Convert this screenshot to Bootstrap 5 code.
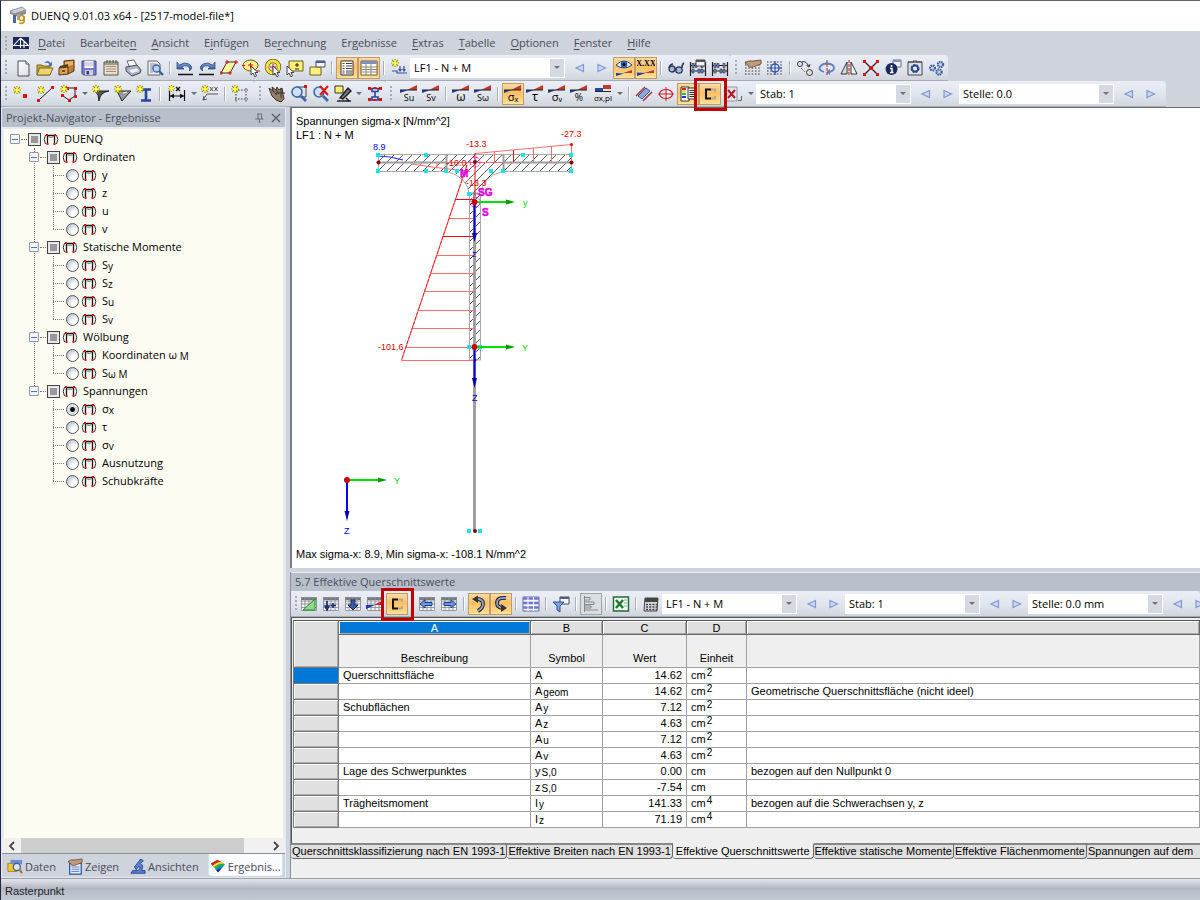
<!DOCTYPE html>
<html lang="de">
<head>
<meta charset="utf-8">
<meta name="viewport" content="width=device-width, initial-scale=1">
<title>DUENQ 9.01.03 x64 - [2517-model-file*]</title>
<link href="https://cdn.jsdelivr.net/npm/bootstrap@5.3.0/dist/css/bootstrap.min.css" rel="stylesheet">
<style>
:root{--frame:#cfd3dc;--ttl:#b8bfca;--ink:#4a4e5a}
html,body{height:100%}
body{font-family:"Open Sans","Noto Sans",sans-serif;font-size:11px;line-height:16px;color:#000;background:var(--frame);overflow:hidden}
.app-win{min-height:100vh;height:100vh;border-left:1px solid #23263f;border-top:1px solid #666}
.title-strip{height:30px;background:#fff;padding:0 8px}
.menu-strip{height:24px;padding-left:4px;color:var(--ink)}
.menu-strip a{color:#484c58;text-decoration:none;margin-right:15px}
.menu-strip u{text-underline-offset:2px}
.grip{width:3px;height:16px;margin:0 5px 0 4px;flex:none;background:repeating-linear-gradient(#a3a9b5 0 2px,transparent 2px 4px) 0 0/2px 100% no-repeat}
.menu-strip .grip{margin:0 4px 0 0;height:14px}
.tbar{height:26px;background:linear-gradient(#ebeef5,#dfe3eb 60%,#d0d4dd);border-bottom:1px solid #a6abb5;border-radius:0 4px 0 0;flex:none}
.tbtn{width:22px;height:22px;padding:0;border:1px solid transparent;border-radius:0;background:none;flex:none;display:flex;align-items:center;justify-content:center;position:relative;line-height:1}
.tbtn.wide{width:25px}
.tbtn.on{border-color:#c29b60;background:linear-gradient(#fcd9a2,#fdbf66 45%,#ffdf91);box-shadow:inset 0 0 1px #fff}
.tbtn.flat{border-color:#9aa5a8;background:#d9dee2}
.tbtn svg,.ic{width:18px;height:18px;flex:none;display:block;overflow:visible}
.drop{width:10px;height:22px;padding:0;border:0;background:none;flex:none;display:flex;align-items:center;justify-content:center}
.drop::before{content:"";border:3px solid transparent;border-top:3px solid #666b76;border-bottom:0}
.vsep{width:1px;height:14px;background:#a9aeb9;box-shadow:1px 0 #fff;margin:0 4px 0 3px;flex:none}
.mark-red::after{content:"";position:absolute;left:-6px;top:-6px;right:-7px;bottom:-7px;border:3px solid #c00000;z-index:3;pointer-events:none}
.pick{appearance:none;-webkit-appearance:none;width:155px;height:20px;flex:none;border:1px solid #fff;border-radius:0;padding:0 16px 0 3px;font-size:11px;line-height:16px;color:#000;
 background:url("data:image/svg+xml,%3Csvg xmlns='http://www.w3.org/2000/svg' width='14' height='18'%3E%3Crect width='14' height='18' fill='%23d5d9e2'/%3E%3Cpath d='M4 7h6l-3 3z' fill='%23707070'/%3E%3C/svg%3E") right center no-repeat #fff}
.pick.narrow{width:135px}
.nav-panel{width:285px;flex:none;border:1px solid #e3e8f2}
.panel-ttl{height:19px;background:var(--ttl);color:var(--ink);padding:0 4px;flex:none}
.tree-box{background:#fcfcf3;border:2px solid #e6ebf3;border-bottom:0;padding-top:1px;flex:1 1 0;min-height:0;overflow:hidden}
.tree-box ul{list-style:none;margin:0;padding:0;position:relative}
.tree-row{height:18px;display:flex;align-items:center;position:relative;white-space:nowrap}
.tree-row label{display:flex;align-items:center;height:18px}
.tree-row .ic{width:16px;height:16px;margin:0 5px 0 2px}
.tree-row sub{font-size:10px;line-height:0;bottom:-1px}
.lvl0{padding-left:6px}
.lvl1{padding-left:25px}
.lvl2{padding-left:62px}
.twig{width:10px;height:10px;padding:0;border:1px solid #8f98ae;border-radius:1px;background:linear-gradient(#5573b0,#5573b0) center/6px 1px no-repeat,#f3f4f6;flex:none;position:relative;z-index:1}
.lead-dots{width:6px;margin:0 1px;border-top:1px dotted #777;flex:none}
.lvl2::before{content:"";position:absolute;left:49px;width:11px;top:9px;border-top:1px dotted #777}
.branch::before{content:"";position:absolute;left:49px;top:0;bottom:9px;border-left:1px dotted #777}
.trunk::before{content:"";position:absolute;left:30px;top:0;height:240px;border-left:1px dotted #777}
.tree-row input{appearance:none;margin:0;flex:none}
.tree-row input[type=checkbox]{width:13px;height:13px;border:1px solid #444;background:linear-gradient(#999,#999) center/7px 7px no-repeat,#e8e8ea}
.tree-row input[type=radio]{width:13px;height:13px;border:1px solid #555;border-radius:50%;background:radial-gradient(circle at 8px 8px,#fff 3px,#c3ccd8 8px)}
.tree-row input[type=radio]:checked{background:radial-gradient(circle at center,#111 2px,#dfe4ea 3px,#d0d6dd 8px)}
.hscroll{height:16px;background:#f0f0f0;flex:none;border-bottom:1px solid #8a8f98}
.hscroll button{width:19px;border:0;padding:0;background:none;flex:none;height:15px;display:flex;align-items:center;justify-content:center}
.hscroll .thumb{width:223px;height:15px;background:#cdcdcd;flex:none}
.nav-tabsrow{height:23px;flex:none;padding:0 0 0 3px;gap:7px;background:var(--frame)}
.nav-tabsrow button{border:0;background:none;padding:3px 2px 0;height:22px;color:#484c58;display:flex;align-items:center;gap:2px;white-space:nowrap;flex:none}
.nav-tabsrow .ic{width:16px;height:16px}
.nav-tabsrow button.cur{background:#fbfbfd;box-shadow:inset 1px 0 #bfeaf0,inset -1px 0 #bfeaf0;border-radius:0 0 3px 3px}
.view-pane{flex:1 1 0;min-height:0;background:#fff;border-left:2px solid #7b7b7b;border-top:1px solid #6b6b6b;overflow:hidden;position:relative;font-family:"Liberation Sans",Arial,sans-serif;font-size:11px;line-height:13px}
.view-pane svg{position:absolute;left:0;top:0;width:100%;height:100%}
.cap-top{position:absolute;left:4px;top:6px;line-height:14px}
.cap-bot{position:absolute;left:4px;bottom:7px}
.view-pane text{font-family:"Liberation Sans",Arial,sans-serif;font-size:9px}
.view-pane .tagged text{font-size:10px}
.tab-pane-box{flex:none;border-left:1px solid #8b8f97;font-family:"Liberation Sans",Arial,sans-serif}
.tab-pane-box .panel-ttl,.tab-pane-box .tbar{font-family:"Open Sans","Noto Sans",sans-serif}
.sheet{border-top:1px solid #555;border-left:1px solid #555;background:#efefef;padding:2px 0 15px 1px;overflow:hidden}
.grid-tab{table-layout:fixed;width:100%;border-collapse:separate;border-spacing:0;font-size:11px;line-height:13px;border-top:1px solid #555;border-left:1px solid #777;margin:0}
.grid-tab td,.grid-tab th{border-right:1px solid #a0a0a0;border-bottom:1px solid #a0a0a0;padding:0 4px;height:16px;background:#fff;font-weight:400;white-space:nowrap;overflow:hidden}
.grid-tab sub,.grid-tab sup{font-size:10px;line-height:0;margin-left:1px}
.grid-tab sub{bottom:-1px}.grid-tab sup{top:-3px}
.grid-tab td:nth-child(4){text-align:right}
.grid-tab thead th{text-align:center;background:#efefef}
.grid-tab .letters th{height:14px;line-height:12px;background:#e0e0e0;border-bottom-color:#666;border-right-color:#666;box-shadow:inset 1px 1px #fff,inset -1px -1px #aaa}
.grid-tab .letters th.sel{background:#0078d7;color:#fff}
.grid-tab .names th{height:33px;vertical-align:bottom;padding-bottom:2px}
.grid-tab tbody th,.grid-tab .letters .corner{background:#e0e0e0;border-color:#777;box-shadow:inset 1px 1px #fff,inset -1px -1px #aaa}
.grid-tab tbody th.sel{background:#0078d7;box-shadow:none}
.sheet-tabs{height:35px;background:#efefef;font-size:11px;overflow:hidden;align-items:flex-start}
.sheet-tabs button{flex:none;height:16px;padding:0 1px;border:1px solid #666;border-left:0;border-top-width:2px;border-top-color:#888;background:#e0e0e0;color:#000;white-space:nowrap;border-radius:0 0 4px 3px;line-height:13px}
.sheet-tabs button.cur{background:#efefef;border-top-color:#efefef;padding:0 3px}
.status-strip{height:22px;flex:none;border-top:1px solid #9b9fa8;background:linear-gradient(#e3e5ea,#b1b6c0 45%,#b9bfca 60%,#c3c9d3);padding:4px 4px 0;font-family:"Liberation Sans",Arial,sans-serif;color:#222}
</style>
</head>
<body>
<svg width="0" height="0" class="position-absolute" aria-hidden="true">
<defs>
<linearGradient id="gBlue" x1="0" y1="0" x2="0" y2="1"><stop offset="0" stop-color="#8fb2e6"/><stop offset="1" stop-color="#26478f"/></linearGradient>
<linearGradient id="gPap" x1="0" y1="0" x2="1" y2="1"><stop offset="0" stop-color="#fff"/><stop offset="1" stop-color="#d9dde6"/></linearGradient>
<pattern id="hatch" width="9" height="9" patternUnits="userSpaceOnUse"><path d="M-1 10L10-1" stroke="#333" stroke-width=".8"/></pattern>
<symbol id="star" viewBox="0 0 8 8"><path d="M4 0V8M0 4H8M1 1L7 7M7 1L1 7" stroke="#a39a00" stroke-width="1.2"/><path d="M4 1V7M1 4H7" stroke="#fff53a" stroke-width="1.6"/><circle cx="4" cy="4" r="1.6" fill="#ffff70"/></symbol>
<symbol id="wedge" viewBox="0 0 18 18"><path d="M7 5L17 0V5z" fill="#c0392b"/><path d="M0 5H8L0 8z" fill="#1f3fa0"/><path d="M0 5H17" stroke="#222" stroke-width="1"/></symbol>
<symbol id="tblw" viewBox="0 0 18 18"><path d="M1 2H17V16H1z" fill="#f5f5f7"/><path d="M1 2H17V5H1z" fill="#777"/><path d="M1.500 2.500H16.500V15.500H1.500zM1 6H17M1 9H17M1 12.500H17M5 3V16M9 3V16M13 3V16" stroke="#8a8e98" fill="none" stroke-width=".9"/></symbol>
<symbol id="frame" viewBox="0 0 16 16"><path d="M4.500 13V4.500H11.500V13" fill="none" stroke="#111" stroke-width="1.300"/><path d="M5 5.500Q8 8 11 5.500" fill="none" stroke="#888"/><path d="M2.500 4Q0 8.500 2.500 13M13.500 4Q16 8.500 13.500 13" fill="none" stroke="#333"/><path d="M3 3h2v2H3zM11 3h2v2h-2zM3.500 12h2v2h-2zM10.500 12h2v2h-2z" fill="#e01010"/></symbol>
<symbol id="lf" viewBox="0 0 18 18"><path d="M12.500 5.500L5 9l7.500 3.500z" fill="#c9d8f6" stroke="#8298cf" stroke-width="1.200"/></symbol>
<symbol id="rt" viewBox="0 0 18 18"><path d="M5 5.500L12.500 9 5 12.500z" fill="#c9d8f6" stroke="#8298cf" stroke-width="1.200"/></symbol>
<symbol id="brk" viewBox="0 0 18 18"><path d="M10 4.500H5V13.500H10" fill="none" stroke="#111" stroke-width="2"/><path d="M10 4.500H14V7M10 13.500H14V11" fill="none" stroke="#b9a98c" stroke-width="2"/></symbol>
<symbol id="new" viewBox="0 0 18 18"><path d="M4 2H12L15 5V17H4z" fill="url(#gPap)" stroke="#4a4e58"/><path d="M12 2V5H15" fill="#fff" stroke="#4a4e58"/></symbol>
<symbol id="open" viewBox="0 0 18 18"><path d="M1 6H6L7 7H14V16H1z" fill="#c9a93c" stroke="#7c671a"/><path d="M3.500 9H17L14 16H1z" fill="#eed273" stroke="#7c671a"/><path d="M8 4Q12 0 14.500 4L16 3V7H12L13.500 5Q11 3 8 4z" fill="#4a74b8"/></symbol>
<symbol id="cab" viewBox="0 0 18 18"><path d="M6 2L16 1V12L10 15H6z" fill="#c07d34" stroke="#5b3714"/><path d="M7 3L15 2V6L7 7z" fill="#e7b368"/><path d="M1 9L10 8V15L1 16z" fill="#e0a354" stroke="#5b3714"/><path d="M4 12H7" stroke="#432" stroke-width="1.500"/><path d="M2 7L10 5V8L1 9z" fill="#513a22"/></symbol>
<symbol id="save" viewBox="0 0 18 18"><path d="M2 2H16V16H3.500L2 14.500z" fill="#777dc4" stroke="#464b86"/><path d="M4.500 2H13.500V9H4.500z" fill="#f3f4f8"/><path d="M5 4H13M5 6H13" stroke="#b8bac8"/><path d="M5 11H13V16H5z" fill="#ccd"/><path d="M6.500 12H9V15.500H6.500z" fill="#333a66"/></symbol>
<symbol id="note" viewBox="0 0 18 18"><path d="M2 3H16V16H2z" fill="#e9dfc9" stroke="#5f574a"/><path d="M4 7.500H14M4 10H14M4 12.500H14" stroke="#9a9080"/><path d="M2 5H16" stroke="#5f574a"/><path d="M5 1V4M8 1V4M11 1V4M14 1V4" stroke="#444"/></symbol>
<symbol id="print" viewBox="0 0 18 18"><path d="M3 2L10 1 13 7 6 9z" fill="#fff" stroke="#666"/><path d="M2 8L13 6 17 11 16 14 8 17 2 12z" fill="#aeb2be" stroke="#43464f"/><path d="M5 11L13 9.500 15 12 8 14z" fill="#eef"/></symbol>
<symbol id="prev" viewBox="0 0 18 18"><path d="M2 2H11L14 5V16H2z" fill="#eceef3" stroke="#666"/><path d="M4 5H10M4 7H10M4 9H7M4 11H7M4 13H7" stroke="#889"/><circle cx="10.500" cy="9.500" r="3.500" fill="#b9d2f0" stroke="#3e6299" stroke-width="1.300"/><path d="M13 12L17 16" stroke="#3e6299" stroke-width="2.400"/></symbol>
<symbol id="undo" viewBox="0 0 18 18"><path d="M1 3V10H8L5.500 8Q11 5 13.500 9 14 10 13.500 12 18 8 13 5 8 2.500 3.500 6z" fill="url(#gBlue)" stroke="#1f3c73" stroke-width=".7"/><path d="M2 15.500H17" stroke="#111" stroke-width="1.500"/></symbol>
<symbol id="para" viewBox="0 0 18 18"><path d="M7 3H16L10 14H1z" fill="#fff7a0" stroke="#333"/><path d="M5 3H9M7 1V5M14 3H18M16 1V5M-1 14H3M1 12V16M8 14H12M10 12V16" stroke="#e01010"/></symbol>
<symbol id="ell" viewBox="0 0 18 18"><ellipse cx="8.500" cy="6.500" rx="7.500" ry="5.500" fill="#ffef8a" stroke="#6b5a10"/><path d="M6 6H11M8.500 4V9M0 6.500H3M14 12H18" stroke="#e01010"/></symbol>
<symbol id="curs" viewBox="0 0 18 18"><path d="M9 7V16L11 14 13 18 14.500 17 13 13.500H16z" fill="#fff" stroke="#444"/></symbol>
<symbol id="ring" viewBox="0 0 18 18"><circle cx="9" cy="8" r="6" fill="none" stroke="#5e5407" stroke-width="4.400"/><circle cx="9" cy="8" r="6" fill="none" stroke="#ffe23c" stroke-width="3"/><path d="M9 5V11M6 8H12" stroke="#e01010"/></symbol>
<symbol id="selpm" viewBox="0 0 18 18"><path d="M3 2H17V12H3z" fill="#ffee7a" stroke="#6b6320"/><path d="M11 4V8M9 6H13M9 10H13" stroke="#222"/></symbol>
<symbol id="yel2" viewBox="0 0 18 18"><path d="M2 8H13V16H2z" fill="#fff07e" stroke="#6b6320"/><path d="M8 2H17V8H8z" fill="#f3f5fb" stroke="#50566b"/><path d="M8 2H17V4H8z" fill="#50608c"/></symbol>
<symbol id="list" viewBox="0 0 18 18"><path d="M3 2H15V16H3z" fill="#fff" stroke="#333"/><path d="M4.500 4.500H6.500M8 4.500H14M4.500 7H6.500M8 7H14M4.500 9.500H6.500M8 9.500H14M4.500 12H6.500M8 12H14M4.500 14H6.500M8 14H14" stroke="#444"/></symbol>
<symbol id="tbl" viewBox="0 0 18 18"><path d="M1 2H17V16H1z" fill="#fff" stroke="#6b5c3d"/><path d="M1 2H17V5H1z" fill="#7e8fc0"/><path d="M1 8H17M1 10.500H17M1 13H17M6 5V16M11 5V16" stroke="#8d8470"/></symbol>
<symbol id="newlf" viewBox="0 0 18 18"><use href="#star" x="1" y="0" width="8" height="8"/><path d="M2 12H7V14H17M10 7V11M14 7V11" stroke="#35549b" stroke-width="1.200" fill="none"/><path d="M8 10h4l-2 3zM12 10h4l-2 3z" fill="#35549b"/></symbol>
<symbol id="eye" viewBox="0 0 18 18"><path d="M1 6Q9-2 17 6 9 12 1 6z" fill="#e8f2ff" stroke="#2a3f66"/><circle cx="9" cy="5.500" r="3.300" fill="#1f5fae"/><circle cx="9" cy="5.500" r="1.400" fill="#000"/><path d="M1 17V14L9 14.500z" fill="#1f3fa0"/><path d="M8 14L17 11V14z" fill="#c0392b"/></symbol>
<symbol id="xxx" viewBox="0 0 18 18"><text x="9" y="7" text-anchor="middle" font-family="Liberation Serif" font-weight="700" font-size="8">X.XX</text><path d="M0 17V13.500L9 14z" fill="#1f3fa0"/><path d="M7 14L17 11V14z" fill="#c0392b"/></symbol>
<symbol id="glas" viewBox="0 0 18 18"><circle cx="5" cy="10" r="3" fill="#a7b9d8" stroke="#2a3654" stroke-width="1.300"/><circle cx="12" cy="11" r="3.200" fill="#a7b9d8" stroke="#2a3654" stroke-width="1.300"/><path d="M2 9Q3 5 6 5M15 9Q15 5 17 4M8 10Q9 9 9 11" stroke="#2a3654" stroke-width="1.500" fill="none"/></symbol>
<symbol id="beads" viewBox="0 0 18 18"><path d="M1.500 3V17M16.500 3V17M1 6.500H17M1 12H17" stroke="#222" stroke-width="1.200"/><path d="M3 4.500h2v4H3zM6 4.500h2v4H6zM12 4.500h2v4h-2zM3 10h2v4H3zM9 10h2v4H9zM12 10h2v4h-2z" fill="#7d95d8" stroke="#223" stroke-width=".6"/></symbol>
<symbol id="dots" viewBox="0 0 18 18"><path d="M1 3H17M1 6H17M1 9H17M1 12H17M1 15H17" stroke="#333" stroke-width="1.200" stroke-dasharray="1.500 1.800"/></symbol>
<symbol id="hand" viewBox="0 0 18 18"><path d="M1 4Q4 1 9 2L17 1V5L9 8Q4 9 4 6z" fill="#c49a78" stroke="#5a4030" stroke-width=".8"/></symbol>
<symbol id="target" viewBox="0 0 18 18"><circle cx="9" cy="9" r="4" fill="#e4ebfa" stroke="#2f56b0" stroke-width="1.400"/><path d="M9 2V16M2 9H16" stroke="#2f56b0" stroke-width="1.200"/></symbol>
<symbol id="circs" viewBox="0 0 18 18"><circle cx="4" cy="5" r="2.500" fill="none" stroke="#333"/><path d="M6 3Q10 1 13 8M13 8L10.500 6.500M13 8L14 5" fill="none" stroke="#333"/><circle cx="13.500" cy="13.500" r="3" fill="#ddd" stroke="#333"/><path d="M5 9L9 13" stroke="#333" stroke-dasharray="1 1"/></symbol>
<symbol id="rot" viewBox="0 0 18 18"><path d="M6 13Q0 11 2 8 4 4.500 9 4.500 16 5 16 9 16 12 11 13" fill="none" stroke="#5c7fbc" stroke-width="1.800"/><path d="M12 10V16L8.500 13z" fill="#5c7fbc"/><path d="M9 1V17" stroke="#d01616" stroke-dasharray="3 1"/></symbol>
<symbol id="mirr" viewBox="0 0 18 18"><path d="M7 3V15H1z" fill="#ddd" stroke="#333"/><path d="M11 3V15H17z" fill="#fff" stroke="#333"/><path d="M9 1V17" stroke="#d01616" stroke-dasharray="3 1"/></symbol>
<symbol id="cross" viewBox="0 0 18 18"><path d="M2 2L16 16M16 2L2 16" stroke="#222" stroke-width="1.300"/><path d="M1 1h3v3H1zM14 1h3v3h-3zM1 14h3v3H1zM14 14h3v3h-3zM7 7h4v4H7z" fill="#d81414"/></symbol>
<symbol id="info" viewBox="0 0 18 18"><path d="M9 1H17V8H9z" fill="#eef" stroke="#66708c"/><path d="M9 1H17V3H9z" fill="#8a94b5"/><circle cx="7.500" cy="10" r="6" fill="#1c2a60"/><path d="M7.500 6V8M6 9.500H8V13M6 13.500H9.500" stroke="#fff" stroke-width="1.500" fill="none"/></symbol>
<symbol id="gearw" viewBox="0 0 18 18"><path d="M2 3H16V16H2z" fill="#dfe2ea" stroke="#444"/><path d="M2 3H8V1M16 3H10V1" stroke="#444" fill="none"/><circle cx="9" cy="9.500" r="3.400" fill="#dbe6fb" stroke="#27458a" stroke-width="2.200" stroke-dasharray="2 .8"/><circle cx="9" cy="9.500" r="3" fill="none" stroke="#27458a" stroke-width="1.500"/></symbol>
<symbol id="gears" viewBox="0 0 18 18"><g fill="#c4d3f0" stroke="#3e5c9e" stroke-width="2.200" stroke-dasharray="1.400 .7"><circle cx="4.500" cy="9" r="2.400"/><circle cx="12.500" cy="5.500" r="2.600"/><circle cx="11" cy="13" r="2.600"/></g></symbol>
<symbol id="node" viewBox="0 0 18 18"><use href="#star" x="1" y="1" width="8" height="8"/><path d="M11 9h4v4h-4z" fill="#d81414"/></symbol>
<symbol id="line" viewBox="0 0 18 18"><path d="M2 15L15 3" stroke="#222"/><path d="M0 14h3v3H0zM14 1h3v3h-3z" fill="#d81414"/><use href="#star" x="0" y="1" width="8" height="8"/></symbol>
<symbol id="poly" viewBox="0 0 18 18"><path d="M8 3H15V11L9 15 3 11" fill="none" stroke="#222"/><path d="M6 2h3v3H6zM14 2h3v3h-3zM14 10h3v3h-3zM8 14h3v3H8zM1 9h3v3H1z" fill="#d81414"/><use href="#star" x="0" y="0" width="8" height="8"/></symbol>
<symbol id="haun" viewBox="0 0 18 18"><path d="M3 6H17Q8 7 7 16Q7 9 3 6z" fill="#555" stroke="#222"/><use href="#star" x="0" y="0" width="8" height="8"/></symbol>
<symbol id="haun2" viewBox="0 0 18 18"><path d="M3 6H17L8 16z" fill="#999" stroke="#222"/><path d="M9 8L13 7" stroke="#fff"/><use href="#star" x="0" y="0" width="8" height="8"/></symbol>
<symbol id="isec" viewBox="0 0 18 18"><path d="M5 4.500H15M5 15.500H15M10 4V16" stroke="#26479b" stroke-width="2.600"/><use href="#star" x="0" y="0" width="8" height="8"/></symbol>
<symbol id="dim" viewBox="0 0 18 18"><path d="M1.500 5V16M16.500 5V16M2 11H16" stroke="#111" stroke-width="1.200"/><path d="M2 11l4-2.500v5zM16 11l-4-2.500v5z" fill="#111"/><path d="M8 6L12 2M12 6L8 2" stroke="#111" stroke-width="1.300"/><use href="#star" x="0" y="0" width="7" height="7"/></symbol>
<symbol id="dimx" viewBox="0 0 18 18"><path d="M2 15L6 9H17M2 15l1-4M2 15l4-1M9 2l3 4M12 2l-3 4M13.500 2l3 4M16.500 2l-3 4" stroke="#555" fill="none"/><use href="#star" x="0" y="0" width="8" height="8"/></symbol>
<symbol id="dash" viewBox="0 0 18 18"><path d="M4 5H17M4 14H17M5 3V17M15 3V17" stroke="#333" stroke-dasharray="1.500 1.500"/><use href="#star" x="0" y="0" width="8" height="8"/></symbol>
<symbol id="grab" viewBox="0 0 18 18"><path d="M1 3L5 6 4 2 8 5 9 2 11 5 14 3 15 9 16 14 13 17 8 15 4 11z" fill="#957e6a" stroke="#3b3026"/><path d="M13 3V13M8 8H17M5 6L9 10M8 5L11 9" stroke="#333"/></symbol>
<symbol id="zoom" viewBox="0 0 18 18"><circle cx="7" cy="7" r="5" fill="#cfe0f7" stroke="#3f68ad" stroke-width="1.600"/><path d="M11 11L16 16" stroke="#3f68ad" stroke-width="2.800"/></symbol>
<symbol id="view" viewBox="0 0 18 18"><path d="M1 1H9V8H1z" fill="#fff46a" stroke="#333"/><path d="M3 16H17M6 13L14 3L17 6L9 14zM12 13L15 16" stroke="#222" stroke-width="1.500" fill="#777"/></symbol>
<symbol id="ired" viewBox="0 0 18 18"><path d="M3 3.500H15M3 15H15M6 4V6.500H9V12H6V15M12 4V6.500H9V12H12V15" stroke="#26479b" stroke-width="1.600" fill="none"/><path d="M2 2h3v3H2zM13 2h3v3h-3zM2 13h3v3H2zM13 13h3v3h-3zM7.500 2h3v2h-3zM7.500 14h3v2h-3z" fill="#d81414"/></symbol>
<symbol id="cut" viewBox="0 0 18 18"><path d="M3 11L11 3 15 6 7 14z" fill="#8ba9dc" stroke="#3c5a97"/><path d="M1 11L10 2M8 16L17 7" stroke="#b03a3a" stroke-width="1.600"/></symbol>
<symbol id="ered" viewBox="0 0 18 18"><ellipse cx="9" cy="9" rx="6.500" ry="4.500" fill="#f8e9ec" stroke="#c02030" stroke-width="1.200"/><path d="M9 2V16M1 9H17" stroke="#c02030"/></symbol>
<symbol id="cbar" viewBox="0 0 18 18"><path d="M2 2H10V16H2z" fill="#fff" stroke="#333"/><path d="M3 4H7" stroke="#d22" stroke-width="2"/><path d="M3 6.500H7" stroke="#ec3" stroke-width="2"/><path d="M3 9H7" stroke="#3b3" stroke-width="2"/><path d="M3 12H7" stroke="#23c" stroke-width="2"/><path d="M9 3H16V14H9z" fill="#eee" stroke="#333"/><path d="M10.500 5.500H15M10.500 7.500H15M10.500 9.500H15M10.500 11.500H15" stroke="#333"/></symbol>
<symbol id="redx" viewBox="0 0 18 18"><path d="M1 2H12V16H1z" fill="#dfe2e8" stroke="#9298a6"/><path d="M3 5L10 13M10 5L3 13" stroke="#b01e2c" stroke-width="2"/><path d="M13 15.500H16.500V11" stroke="#666" fill="none"/></symbol>
<symbol id="swirl" viewBox="0 0 18 18"><path d="M7 4Q13 4 13 9 13 13 8 16" fill="none" stroke="#222" stroke-width="3.800"/><path d="M7 4Q13 4 13 9 13 13 8 16" fill="none" stroke="#8da4cf" stroke-width="1.800"/><path d="M8 0.500L2 4 8 8z" fill="#333"/></symbol>
<symbol id="funnel" viewBox="0 0 18 18"><path d="M8 2H17V9H8z" fill="#fff" stroke="#445"/><path d="M8 2H17V4H8z" fill="#4e5c8d"/><path d="M1 7H12L8 11V17L5 15V11z" fill="#7aa5df" stroke="#2d518f"/></symbol>
<symbol id="bars" viewBox="0 0 18 18"><path d="M2.500 1V17M3 2.500H8V5H3M3 7H12V9.500H3M3 11H9V13H3M3 15H16" fill="none" stroke="#83898e"/></symbol>
<symbol id="xls" viewBox="0 0 18 18"><path d="M1.500 2H16.500V16H1.500z" fill="#f2faf2" stroke="#1d6b34" stroke-width="1.400"/><path d="M4 5L11 13M11 5L4 13" stroke="#1d7c38" stroke-width="2.600"/><path d="M12 5H15.500M12 8H15.500M12 11H15.500" stroke="#7bb488"/></symbol>
<symbol id="calc" viewBox="0 0 18 18"><path d="M3 3H16L15 16H2z" fill="#d7dae1" stroke="#444"/><path d="M3 3H16V7H3z" fill="#444"/><path d="M4 9.500H15M4 12H15M4 14.500H15" stroke="#444" stroke-width="1.300" stroke-dasharray="2 1.200"/></symbol>
</defs>
</svg>

<div class="app-win d-flex flex-column">
 <header class="title-strip d-flex align-items-center gap-1">
  <svg class="ic" viewBox="0 0 18 18"><path d="M1 4L13 0 17 3 5 7z" fill="#cdd0d6" stroke="#777" stroke-width=".7"/><path d="M1 4V7L5 8V7zM5 7L17 3V7L5 10z" fill="#8a8e98"/><path d="M4 8V16L7 16V8z" fill="#4c66a6"/><path d="M8 8V13L11 12V7" fill="#a9aeba"/><circle cx="12.500" cy="11" r="2.500" fill="none" stroke="#c79622" stroke-width="1.700"/><path d="M15 9V15Q14 17 10 16" fill="none" stroke="#c79622" stroke-width="1.700"/></svg>
  <span>DUENQ 9.01.03 x64 - [2517-model-file*]</span>
 </header>
 <nav class="menu-strip d-flex align-items-center">
  <span class="grip"></span>
  <svg class="ic me-2" viewBox="0 0 18 18"><path d="M1 3H17V15H1z" fill="#1c2858"/><path d="M1 11.500H17M8.500 4V14M8.500 4L2 11M8.500 4L16 11M12 8V14" stroke="#fff" stroke-width="1.100"/></svg>
  <a href="#"><u>D</u>atei</a><a href="#">Bearbeite<u>n</u></a><a href="#"><u>A</u>nsicht</a><a href="#">E<u>i</u>nfügen</a><a href="#">Be<u>r</u>echnung</a><a href="#">Er<u>g</u>ebnisse</a><a href="#"><u>E</u>xtras</a><a href="#"><u>T</u>abelle</a><a href="#"><u>O</u>ptionen</a><a href="#"><u>F</u>enster</a><a href="#"><u>H</u>ilfe</a>
 </nav>
 <div class="d-flex">
  <div class="tbar d-flex align-items-center" role="toolbar">
   <span class="grip me-1"></span>
   <button class="tbtn" aria-label="Neu"><svg><use href="#new"/></svg></button>
   <button class="tbtn" aria-label="Öffnen"><svg><use href="#open"/></svg></button>
   <button class="tbtn" aria-label="Projekte"><svg><use href="#cab"/></svg></button>
   <button class="tbtn" aria-label="Speichern"><svg><use href="#save"/></svg></button>
   <button class="tbtn" aria-label="Basisangaben"><svg><use href="#note"/></svg></button>
   <button class="tbtn" aria-label="Drucken"><svg><use href="#print"/></svg></button>
   <button class="tbtn" aria-label="Vorschau"><svg><use href="#prev"/></svg></button>
   <i class="vsep"></i>
   <button class="tbtn" aria-label="Rückgängig"><svg><use href="#undo"/></svg></button>
   <button class="tbtn" aria-label="Wiederholen"><svg viewBox="0 0 18 18"><use href="#undo" transform="matrix(-1 0 0 1 18 0)" width="18" height="18"/></svg></button>
   <button class="tbtn" aria-label="Auswahl Rhombus"><svg><use href="#para"/></svg></button>
   <button class="tbtn" aria-label="Auswahl Ellipse"><svg><use href="#ell"/><use href="#curs"/></svg></button>
   <button class="tbtn" aria-label="Auswahl Ring"><svg><use href="#ring"/><use href="#curs"/></svg></button>
   <button class="tbtn" aria-label="Spezialauswahl"><svg><use href="#selpm"/><use href="#curs" x="-8"/></svg></button>
   <button class="tbtn" aria-label="Sichtbarkeit"><svg><use href="#yel2"/></svg></button>
   <i class="vsep"></i>
   <button class="tbtn on" aria-label="Navigator"><svg><use href="#list"/></svg></button>
   <button class="tbtn on" aria-label="Tabellen"><svg><use href="#tbl"/></svg></button>
   <i class="vsep"></i>
   <button class="tbtn" aria-label="Neuer Lastfall"><svg><use href="#newlf"/></svg></button>
   <select class="pick me-1" aria-label="Lastfall"><option>LF1 - N + M</option></select>
   <button class="tbtn" aria-label="Zurück"><svg><use href="#lf"/></svg></button>
   <button class="tbtn" aria-label="Vor"><svg><use href="#rt"/></svg></button>
   <button class="tbtn on" aria-label="Ergebnisse anzeigen"><svg><use href="#eye"/></svg></button>
   <button class="tbtn on" aria-label="Werte anzeigen"><svg><use href="#xxx"/></svg></button>
   <i class="vsep"></i>
   <button class="tbtn" aria-label="Kontrolle"><svg><use href="#glas"/></svg></button>
   <button class="tbtn" aria-label="Berechnen"><svg viewBox="0 0 18 18"><use href="#beads"/><path d="M7 1H16V7H7z" fill="#f4f5f8" stroke="#444"/><path d="M7 2H16" stroke="#555" stroke-width="2"/></svg></button>
   <button class="tbtn" aria-label="Alles berechnen"><svg><use href="#beads"/></svg></button>
  </div>
  <div class="tbar d-flex align-items-center" role="toolbar">
   <span class="grip mx-1"></span>
   <button class="tbtn" aria-label="Raster"><svg><use href="#dots"/><use href="#hand"/></svg></button>
   <button class="tbtn" aria-label="Objektfang"><svg><use href="#dots"/><use href="#target"/></svg></button>
   <i class="vsep"></i>
   <button class="tbtn" aria-label="Verschieben"><svg><use href="#circs"/></svg></button>
   <button class="tbtn" aria-label="Drehen"><svg><use href="#rot"/></svg></button>
   <button class="tbtn" aria-label="Spiegeln"><svg><use href="#mirr"/></svg></button>
   <button class="tbtn" aria-label="Verbinden"><svg><use href="#cross"/></svg></button>
   <button class="tbtn" aria-label="Info"><svg><use href="#info"/></svg></button>
   <button class="tbtn" aria-label="Einstellungen"><svg><use href="#gearw"/></svg></button>
   <button class="tbtn" aria-label="Optionen"><svg><use href="#gears"/></svg></button>
  </div>
 </div>
 <div class="d-flex">
  <div class="tbar d-flex align-items-center pe-1" role="toolbar">
   <span class="grip me-0"></span>
   <button class="tbtn wide" aria-label="Neuer Knoten"><svg><use href="#node"/></svg></button>
   <button class="tbtn wide" aria-label="Neue Linie"><svg><use href="#line"/></svg></button>
   <button class="tbtn" aria-label="Neue Polylinie"><svg><use href="#poly"/></svg></button>
   <button class="drop" aria-label="Mehr"></button>
   <button class="tbtn" aria-label="Neues Element"><svg><use href="#haun"/></svg></button>
   <button class="tbtn" aria-label="Neue Voute"><svg><use href="#haun2"/></svg></button>
   <button class="tbtn" aria-label="Neues Profil"><svg><use href="#isec"/></svg></button>
   <i class="vsep"></i>
   <button class="tbtn wide" aria-label="Bemaßung"><svg><use href="#dim"/></svg></button>
   <button class="drop" aria-label="Mehr"></button>
   <button class="tbtn" aria-label="Kommentar"><svg><use href="#dimx"/></svg></button>
   <i class="vsep"></i>
   <button class="tbtn" aria-label="Hilfslinie"><svg><use href="#dash"/></svg></button>
  </div>
  <div class="tbar d-flex align-items-center" role="toolbar">
   <span class="grip mx-1"></span>
   <button class="tbtn" aria-label="Ansicht bewegen"><svg><use href="#grab"/></svg></button>
   <button class="tbtn" aria-label="Fensterzoom"><svg viewBox="0 0 18 18"><path d="M6 2H16V12H6z" fill="none" stroke="#444"/><use href="#zoom"/><path d="M14 0h3v3h-3z" fill="#d81414"/></svg></button>
   <button class="tbtn" aria-label="Zoom aufheben"><svg viewBox="0 0 18 18"><use href="#zoom"/><path d="M8 1L16 10M16 1L8 10" stroke="#d81414" stroke-width="2"/></svg></button>
   <button class="tbtn" aria-label="Darstellung"><svg><use href="#view"/></svg></button>
   <button class="drop" aria-label="Mehr"></button>
   <button class="tbtn" aria-label="Profilansicht"><svg><use href="#ired"/></svg></button>
  </div>
  <div class="tbar d-flex align-items-center pe-1" role="toolbar">
   <span class="grip"></span>
   <button class="tbtn" aria-label="Su"><svg viewBox="0 0 18 18"><use href="#wedge"/><text x="9" y="16" text-anchor="middle" font-size="9">Su</text></svg></button>
   <button class="tbtn" aria-label="Sv"><svg viewBox="0 0 18 18"><use href="#wedge"/><text x="9" y="16" text-anchor="middle" font-size="9">Sv</text></svg></button>
   <i class="vsep"></i>
   <button class="tbtn" aria-label="Omega"><svg viewBox="0 0 18 18"><use href="#wedge"/><text x="9" y="16" text-anchor="middle" font-size="12">ω</text></svg></button>
   <button class="tbtn" aria-label="S Omega"><svg viewBox="0 0 18 18"><use href="#wedge"/><text x="9" y="16" text-anchor="middle" font-size="9">Sω</text></svg></button>
   <i class="vsep"></i>
   <button class="tbtn on" aria-label="Sigma x"><svg viewBox="0 0 18 18"><use href="#wedge"/><text x="9" y="16" text-anchor="middle" font-size="11">σₓ</text></svg></button>
   <button class="tbtn" aria-label="Tau"><svg viewBox="0 0 18 18"><use href="#wedge"/><text x="9" y="16" text-anchor="middle" font-size="13">τ</text></svg></button>
   <button class="tbtn" aria-label="Sigma v"><svg viewBox="0 0 18 18"><use href="#wedge"/><text x="9" y="16" text-anchor="middle" font-size="11">σᵥ</text></svg></button>
   <button class="tbtn" aria-label="Ausnutzung"><svg viewBox="0 0 18 18"><use href="#wedge"/><text x="9" y="16" text-anchor="middle" font-size="10">%</text></svg></button>
   <button class="tbtn wide" aria-label="Sigma x plastisch"><svg viewBox="0 0 18 18"><path d="M1 3H9V6H1z" fill="#26479b"/><path d="M9 0H17V4H9z" fill="#c0392b"/><path d="M1 6.500H17" stroke="#222"/><text x="9" y="16" text-anchor="middle" font-size="8">σx,pl</text></svg></button>
   <button class="drop" aria-label="Mehr"></button>
   <i class="vsep"></i>
   <button class="tbtn" aria-label="Schnitt"><svg><use href="#cut"/></svg></button>
   <button class="tbtn" aria-label="Trägheitsellipse"><svg><use href="#ered"/></svg></button>
   <button class="tbtn on" aria-label="Farbskala"><svg><use href="#cbar"/></svg></button>
   <button class="tbtn on mark-red" aria-label="Effektiver Querschnitt"><svg><use href="#brk"/></svg></button>
   <button class="tbtn wide" aria-label="Auswahl löschen"><svg><use href="#redx"/></svg></button>
   <button class="drop" aria-label="Mehr"></button>
   <select class="pick" aria-label="Stab"><option>Stab: 1</option></select>
   <button class="tbtn ms-1" aria-label="Zurück"><svg><use href="#lf"/></svg></button>
   <button class="tbtn" aria-label="Vor"><svg><use href="#rt"/></svg></button>
   <select class="pick" aria-label="Stelle"><option>Stelle: 0.0</option></select>
   <button class="tbtn ms-1" aria-label="Zurück"><svg><use href="#lf"/></svg></button>
   <button class="tbtn" aria-label="Vor"><svg><use href="#rt"/></svg></button>
  </div>
 </div>

 <main class="d-flex flex-grow-1" style="min-height:0">
  <aside class="nav-panel d-flex flex-column me-1">
   <div class="panel-ttl d-flex align-items-center justify-content-between"><span>Projekt-Navigator - Ergebnisse</span>
    <svg width="28" height="12" viewBox="0 0 28 12"><path d="M4 2H9M5 2V7M8.500 2V7M2.500 7H10.500M6.500 7V11" stroke="#6a6f7a" fill="none"/><path d="M19 2L27 10M27 2L19 10" stroke="#5a5f6a" stroke-width="1.400"/></svg></div>
   <div class="tree-box">
    <div class="tree-row lvl0"><button class="twig" aria-label="Zuklappen"></button><span class="lead-dots"></span><label><input type="checkbox"><svg class="ic"><use href="#frame"/></svg><span>DUENQ</span></label></div>
    <div class="trunk position-relative">
    <div class="tree-row lvl1"><button class="twig" aria-label="Zuklappen"></button><span class="lead-dots"></span><label><input type="checkbox"><svg class="ic"><use href="#frame"/></svg><span>Ordinaten</span></label></div>
    <ul class="branch">
     <li class="tree-row lvl2"><label><input type="radio" name="erg"><svg class="ic"><use href="#frame"/></svg><span>y</span></label></li>
     <li class="tree-row lvl2"><label><input type="radio" name="erg"><svg class="ic"><use href="#frame"/></svg><span>z</span></label></li>
     <li class="tree-row lvl2"><label><input type="radio" name="erg"><svg class="ic"><use href="#frame"/></svg><span>u</span></label></li>
     <li class="tree-row lvl2"><label><input type="radio" name="erg"><svg class="ic"><use href="#frame"/></svg><span>v</span></label></li>
    </ul>
    <div class="tree-row lvl1"><button class="twig" aria-label="Zuklappen"></button><span class="lead-dots"></span><label><input type="checkbox"><svg class="ic"><use href="#frame"/></svg><span>Statische Momente</span></label></div>
    <ul class="branch">
     <li class="tree-row lvl2"><label><input type="radio" name="erg"><svg class="ic"><use href="#frame"/></svg><span>S<sub>y</sub></span></label></li>
     <li class="tree-row lvl2"><label><input type="radio" name="erg"><svg class="ic"><use href="#frame"/></svg><span>S<sub>z</sub></span></label></li>
     <li class="tree-row lvl2"><label><input type="radio" name="erg"><svg class="ic"><use href="#frame"/></svg><span>S<sub>u</sub></span></label></li>
     <li class="tree-row lvl2"><label><input type="radio" name="erg"><svg class="ic"><use href="#frame"/></svg><span>S<sub>v</sub></span></label></li>
    </ul>
    <div class="tree-row lvl1"><button class="twig" aria-label="Zuklappen"></button><span class="lead-dots"></span><label><input type="checkbox"><svg class="ic"><use href="#frame"/></svg><span>Wölbung</span></label></div>
    <ul class="branch">
     <li class="tree-row lvl2"><label><input type="radio" name="erg"><svg class="ic"><use href="#frame"/></svg><span>Koordinaten ω<sub> M</sub></span></label></li>
     <li class="tree-row lvl2"><label><input type="radio" name="erg"><svg class="ic"><use href="#frame"/></svg><span>S<sub>ω M</sub></span></label></li>
    </ul>
    <div class="tree-row lvl1"><button class="twig" aria-label="Zuklappen"></button><span class="lead-dots"></span><label><input type="checkbox"><svg class="ic"><use href="#frame"/></svg><span>Spannungen</span></label></div>
    <ul class="branch">
     <li class="tree-row lvl2"><label><input type="radio" name="erg" checked><svg class="ic"><use href="#frame"/></svg><span>σ<sub>x</sub></span></label></li>
     <li class="tree-row lvl2"><label><input type="radio" name="erg"><svg class="ic"><use href="#frame"/></svg><span>τ</span></label></li>
     <li class="tree-row lvl2"><label><input type="radio" name="erg"><svg class="ic"><use href="#frame"/></svg><span>σ<sub>v</sub></span></label></li>
     <li class="tree-row lvl2"><label><input type="radio" name="erg"><svg class="ic"><use href="#frame"/></svg><span>Ausnutzung</span></label></li>
     <li class="tree-row lvl2"><label><input type="radio" name="erg"><svg class="ic"><use href="#frame"/></svg><span>Schubkräfte</span></label></li>
    </ul>
    </div>
   </div>
   <div class="hscroll d-flex">
    <button aria-label="Nach links"><svg width="8" height="10" viewBox="0 0 8 10"><path d="M6 1L2 5 6 9" stroke="#444" stroke-width="1.800" fill="none"/></svg></button>
    <span class="thumb"></span>
    <button class="ms-auto" aria-label="Nach rechts"><svg width="8" height="10" viewBox="0 0 8 10"><path d="M2 1L6 5 2 9" stroke="#444" stroke-width="1.800" fill="none"/></svg></button>
   </div>
   <div class="nav-tabsrow d-flex">
    <button><svg class="ic" viewBox="0 0 18 18"><path d="M4 1H17V6H4z" fill="#6a8fd8"/><path d="M1 5H6L7 6H11V14H1z" fill="#f2c832" stroke="#a9841a"/><circle cx="11" cy="9" r="4" fill="#d6e6fa" stroke="#3c5a94" stroke-width="1.400"/><path d="M14 12L17 16" stroke="#a8793c" stroke-width="2.400"/></svg>Daten</button>
    <button><svg class="ic" viewBox="0 0 18 18"><path d="M3 5H16V17H3z" fill="#e6eefb" stroke="#2d549e" stroke-width="1.400"/><path d="M5 9H14M5 11.500H14M5 14H14" stroke="#4f78c2"/><use href="#hand" y="-1"/></svg>Zeigen</button>
    <button><svg class="ic" viewBox="0 0 18 18"><path d="M1 16H17V13H13Q16 8 12 5L15 2 12 0 5 9 7 12 10 8Q13 10 9 13H3z" fill="#5a80d6" stroke="#233f86"/></svg>Ansichten</button>
    <button class="cur"><svg class="ic" viewBox="0 0 18 18"><path d="M1 5L8 1 17 6 9 15z" fill="#23b14d"/><path d="M1 5L8 1 13 3Q6 4 3 8z" fill="#d12020"/><path d="M3 8Q6 4 13 3L15 5Q8 5 4.500 9.500z" fill="#f7e12a"/><path d="M6 11.500Q10 8 16 7L9 15z" fill="#1b7fe0"/><path d="M7.500 13Q10 11 13 10.500L9 15z" fill="#1a1f9c"/></svg>Ergebnis...</button>
   </div>
  </aside>

  <section class="d-flex flex-column flex-grow-1" style="min-width:0">
   <div class="view-pane">
    <svg role="img" aria-label="Spannungsverlauf"><g transform="translate(-292 -108)" fill="none">
     <path d="M378.500 154.500H571.500V171.500H503Q482 176 480.500 196V360H469.500V196Q468 176 446 171.500H378.500z" fill="url(#hatch)" stroke="#aaa"/>
     <path d="M378 162.500H446M503 162.500H571M446.500 154V171M503.500 154V171M469 193.500H480" stroke="#9c9c9c" stroke-width="2"/>
     <path d="M474.500 194V531" stroke="#a0a0a0" stroke-width="3"/>
     <g stroke="#ff6e6e"><path d="M446 162.500H503M475 153.500L571.500 144.500V162M494.500 152V162M533.500 148V162M551.500 147V162M412 164L432 167 470 171.500M437 162V167"/>
     <path d="M467 165L401.500 360.500H475M456 199.500H475M449 218.500H475M443 236.500H475M437 255.500H475M431 273.500H475M425 291.500H475M418 310.500H475M412 328.500H475M406 347.500H475"/></g>
     <path d="M467 165L401.500 360" stroke="#e22" stroke-dasharray="4 1"/><path d="M455 199.500H475M443 236.500H475M513.500 150V162M475 153V195" stroke="#e01010"/>
     <path d="M378 156L390 157 403 160" stroke="#22f"/>
     <g fill="#14e4ec"><path d="M376 153h4v4h-4zM424 153h4v4h-4zM521 153h4v4h-4zM569 153h4v4h-4zM376 169h4v4h-4zM424 169h4v4h-4zM444 169h4v4h-4zM455 169h4v4h-4zM489 169h4v4h-4zM501 169h4v4h-4zM569 169h4v4h-4zM467 192h4v4h-4zM467 345h4v4h-4zM478 345h4v4h-4zM467 529h4v4h-4zM478 529h4v4h-4z"/></g>
     <circle cx="475" cy="162" r="5" stroke="#f0c" stroke-dasharray="2 1"/><circle cx="475" cy="202" r="5" stroke="#f0c" stroke-dasharray="2 1"/>
     <g fill="#800"><circle cx="378.500" cy="162.500" r="2"/><circle cx="571.500" cy="162.500" r="2"/><circle cx="475" cy="162" r="2"/><circle cx="475" cy="531" r="2"/><circle cx="475" cy="360" r="1.500"/></g><circle cx="571.500" cy="144.500" r="1.500" fill="#e00"/>
     <g stroke="#00e000" stroke-width="2"><path d="M475 202H507M475 347H507M347 480H379"/></g>
     <g fill="#0a9a0a"><path d="M506 199.500L515 202 506 204.500zM506 344.500L515 347 506 349.500zM378 477.500L387 480 378 482.500z"/></g>
     <g stroke="#0000f0" stroke-width="2"><path d="M474.500 202V236M474.500 347V380M347 480V513"/></g>
     <g fill="#0000b8"><path d="M472 233H477L474.500 242zM472 378H477L474.500 388zM344.500 511H349.500L347 521z"/></g>
     <g fill="#c80000"><circle cx="474.500" cy="202" r="3"/><circle cx="474.500" cy="347" r="3"/><circle cx="347" cy="480" r="3"/></g>
     <g fill="#e00000"><text x="466" y="147">-13.3</text><text x="561" y="137">-27.3</text><text x="446" y="166">-10.0</text><text x="466" y="186">-13.3</text><text x="378" y="350">-101.6</text></g>
     <text x="373" y="150" fill="#0000e0">8.9</text>
     <g class="tagged" fill="#e000e0" stroke="#e000e0" stroke-width=".5" font-weight="700"><text x="460" y="177">M</text><text x="478" y="196">SG</text><text x="482" y="216">S</text></g>
     <g fill="#00d800"><text x="523" y="206">y</text><text x="522" y="351">Y</text><text x="394" y="484">Y</text></g>
     <g fill="#0000f0"><text x="472" y="257">z</text><text x="472" y="401">Z</text><text x="344" y="534">Z</text></g>
    </g></svg>
    <div class="cap-top">Spannungen sigma-x [N/mm^2]<br>LF1 : N + M</div>
    <div class="cap-bot">Max sigma-x: 8.9, Min sigma-x: -108.1 N/mm^2</div>
   </div>
   <div class="tab-pane-box mt-1">
    <div class="panel-ttl border-top border-light-subtle d-flex align-items-center">5.7 Effektive Querschnittswerte</div>
    <div class="tbar d-flex align-items-center" role="toolbar">
     <span class="grip ms-1 me-0"></span>
     <button class="tbtn" aria-label="Grafik"><svg viewBox="0 0 18 18"><use href="#tblw"/><path d="M15 4V15H3z" fill="#8fdc8f" stroke="#2a8a2a"/></svg></button>
     <button class="tbtn" aria-label="Einfügen"><svg viewBox="0 0 18 18"><use href="#tblw"/><path d="M5 6V14M3 11l2 4 2-4zM11 8V13M8.500 10.500H14" stroke="#1c2f70" stroke-width="1.600"/></svg></button>
     <button class="tbtn" aria-label="Nach unten"><svg viewBox="0 0 18 18"><use href="#tblw"/><path d="M7 5H11V10H14L9 15 4 10H7z" fill="#3a5ba8" stroke="#182c66"/></svg></button>
     <button class="tbtn" aria-label="Verlauf"><svg viewBox="0 0 18 18"><use href="#tblw"/><path d="M0 10H9L0 14z" fill="#1f3fa0"/><path d="M8 10L18 5V10z" fill="#d02020"/></svg></button>
     <button class="tbtn on mark-red" aria-label="Effektiver Querschnitt"><svg><use href="#brk"/></svg></button>
     <button class="tbtn ms-2" aria-label="Vorherige Tabelle"><svg viewBox="0 0 18 18"><use href="#tblw"/><path d="M2 9L7 5V7.500H14V10.500H7V13z" fill="#6d95e0" stroke="#1f3f88"/></svg></button>
     <button class="tbtn" aria-label="Nächste Tabelle"><svg viewBox="0 0 18 18"><use href="#tblw"/><path d="M16 9L11 5V7.500H4V10.500H11V13z" fill="#6d95e0" stroke="#1f3f88"/></svg></button>
     <i class="vsep"></i>
     <button class="tbtn on" aria-label="Auswahl synchronisieren"><svg><use href="#swirl"/></svg></button>
     <button class="tbtn on" aria-label="Selektion übernehmen"><svg viewBox="0 0 18 18"><path d="M14 3Q5 2 5 8 5 12 10 13" fill="none" stroke="#222" stroke-width="3.800"/><path d="M14 3Q5 2 5 8 5 12 10 13" fill="none" stroke="#8da4cf" stroke-width="1.800"/><path d="M9 9L15 13 9 17z" fill="#333"/></svg></button>
     <i class="vsep"></i>
     <button class="tbtn" aria-label="Raster"><svg viewBox="0 0 18 18"><path d="M1 2H17V16H1z" fill="#f3f3fa" stroke="#6a71a8"/><path d="M1 3.500H17M1 8H17M1 12.500H17" stroke="#6d79c6" stroke-width="2.400"/><path d="M6 2V16M11.500 2V16" stroke="#fff"/></svg></button>
     <i class="vsep"></i>
     <button class="tbtn" aria-label="Filter"><svg><use href="#funnel"/></svg></button>
     <i class="vsep"></i>
     <button class="tbtn flat" aria-label="Balken"><svg><use href="#bars"/></svg></button>
     <i class="vsep"></i>
     <button class="tbtn" aria-label="Excel"><svg><use href="#xls"/></svg></button>
     <i class="vsep"></i>
     <button class="tbtn" aria-label="Rechner"><svg><use href="#calc"/></svg></button>
     <select class="pick narrow" aria-label="Lastfall"><option>LF1 - N + M</option></select>
     <button class="tbtn ms-1" aria-label="Zurück"><svg><use href="#lf"/></svg></button>
     <button class="tbtn" aria-label="Vor"><svg><use href="#rt"/></svg></button>
     <select class="pick narrow" aria-label="Stab"><option>Stab: 1</option></select>
     <button class="tbtn ms-1" aria-label="Zurück"><svg><use href="#lf"/></svg></button>
     <button class="tbtn" aria-label="Vor"><svg><use href="#rt"/></svg></button>
     <select class="pick narrow" aria-label="Stelle"><option>Stelle: 0.0 mm</option></select>
     <button class="tbtn ms-1" aria-label="Zurück"><svg><use href="#lf"/></svg></button>
     <button class="tbtn" aria-label="Vor"><svg><use href="#rt"/></svg></button>
    </div>
    <div class="sheet">
     <table class="grid-tab">
      <colgroup><col style="width:45px"><col style="width:192px"><col style="width:72px"><col style="width:84px"><col style="width:60px"><col></colgroup>
      <thead>
       <tr class="letters"><th rowspan="2" class="corner"></th><th class="sel">A</th><th>B</th><th>C</th><th>D</th><th></th></tr>
       <tr class="names"><th>Beschreibung</th><th>Symbol</th><th>Wert</th><th>Einheit</th><th></th></tr>
      </thead>
      <tbody>
       <tr><th class="sel"></th><td>Querschnittsfläche</td><td>A</td><td>14.62</td><td>cm<sup>2</sup></td><td></td></tr>
       <tr><th></th><td></td><td>A<sub>geom</sub></td><td>14.62</td><td>cm<sup>2</sup></td><td>Geometrische Querschnittsfläche (nicht ideel)</td></tr>
       <tr><th></th><td>Schubflächen</td><td>A<sub>y</sub></td><td>7.12</td><td>cm<sup>2</sup></td><td></td></tr>
       <tr><th></th><td></td><td>A<sub>z</sub></td><td>4.63</td><td>cm<sup>2</sup></td><td></td></tr>
       <tr><th></th><td></td><td>A<sub>u</sub></td><td>7.12</td><td>cm<sup>2</sup></td><td></td></tr>
       <tr><th></th><td></td><td>A<sub>v</sub></td><td>4.63</td><td>cm<sup>2</sup></td><td></td></tr>
       <tr><th></th><td>Lage des Schwerpunktes</td><td>y<sub>S,0</sub></td><td>0.00</td><td>cm</td><td>bezogen auf den Nullpunkt 0</td></tr>
       <tr><th></th><td></td><td>z<sub>S,0</sub></td><td>-7.54</td><td>cm</td><td></td></tr>
       <tr><th></th><td>Trägheitsmoment</td><td>I<sub>y</sub></td><td>141.33</td><td>cm<sup>4</sup></td><td>bezogen auf die Schwerachsen y, z</td></tr>
       <tr><th></th><td></td><td>I<sub>z</sub></td><td>71.19</td><td>cm<sup>4</sup></td><td></td></tr>
      </tbody>
     </table>
    </div>
    <div class="sheet-tabs d-flex">
     <button>Querschnittsklassifizierung nach EN 1993-1</button><button>Effektive Breiten nach EN 1993-1</button><button class="cur">Effektive Querschnittswerte</button><button>Effektive statische Momente</button><button>Effektive Flächenmomente</button><button class="flex-grow-1 text-start border-end-0 rounded-0">Spannungen auf dem</button>
    </div>
   </div>
  </section>
 </main>
 <footer class="status-strip">Rasterpunkt</footer>
</div>
<script src="https://cdn.jsdelivr.net/npm/bootstrap@5.3.0/dist/js/bootstrap.bundle.min.js"></script>
</body>
</html>
